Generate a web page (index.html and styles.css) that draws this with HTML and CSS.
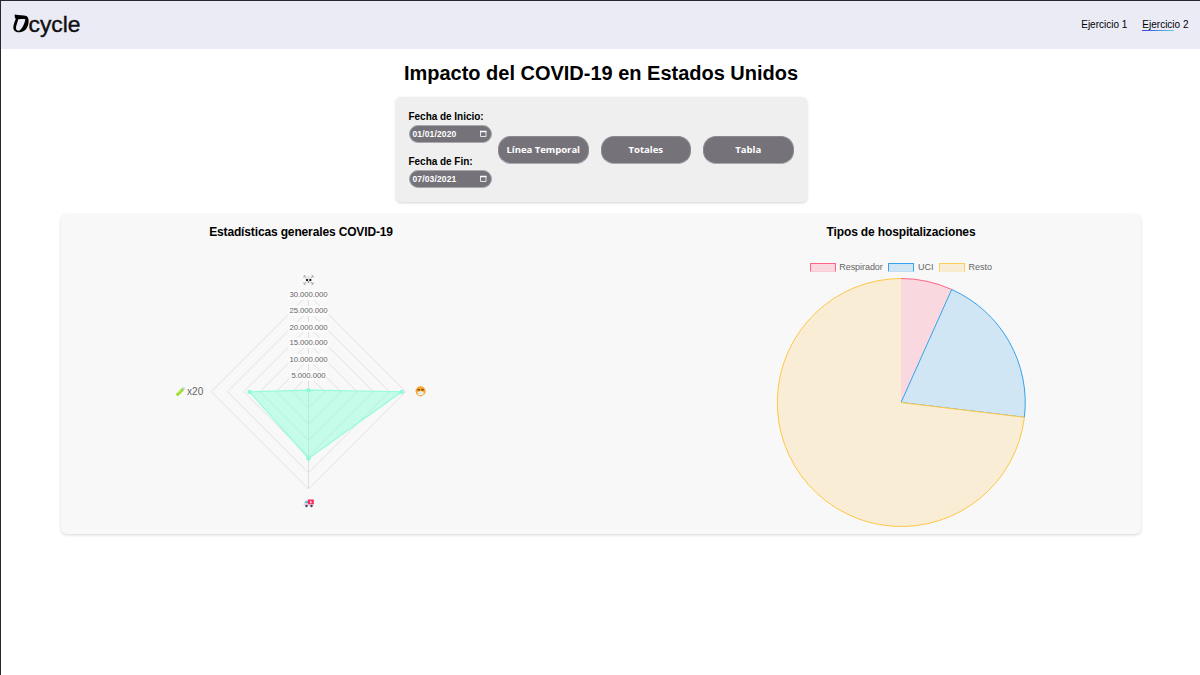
FILE: index.html
```html
<!DOCTYPE html>
<html lang="es">
<head>
<meta charset="utf-8">
<title>Dcycle</title>
<link rel="stylesheet" href="styles.css">
</head>
<body class="page">
<header class="header">
  <svg class="logo" width="70" height="28" viewBox="12 10 70 28" role="img" aria-label="Dcycle">
    <path class="logo-mark" fill-rule="evenodd" d="M14.8 13.400C19 14.400 23.500 13.900 26.400 15C28.700 16.200 29.100 19.500 28.300 23C27.200 28 24.300 31 19.500 31.300C15.600 31.500 13.300 29.500 13.300 26.500C13.300 23.500 15.200 20 15.800 17.800C14.900 17.100 14.500 15.400 14.800 13.400ZM18.200 18.200C17.500 21.500 16 24.500 16 27C16 29.200 17.500 30 19.600 29.500C22.600 27 24.800 22 25.300 18.200C23 17.800 20.500 18.300 18.200 18.200Z"/>
    <text class="logo-text" x="28.500" y="30.500" textLength="52" lengthAdjust="spacingAndGlyphs">cycle</text>
  </svg>
  <nav class="nav">
    <a class="nav-link">Ejercicio 1</a>
    <a class="nav-link nav-link-active">Ejercicio 2</a>
  </nav>
</header>
<main class="main">
  <h1 class="title">Impacto del COVID-19 en Estados Unidos</h1>
  <section class="filters">
    <div class="dates">
      <label class="date-label">Fecha de Inicio:</label>
      <div class="date"><span>01/01/2020</span><svg width="8" height="8" viewBox="0 0 8 8"><path class="calendar" d="M1.500 1.500h5.500v5h-5.500z"/><path class="calendar calendar-top" d="M1 1.500h6.500"/></svg></div>
      <label class="date-label date-label-end">Fecha de Fin:</label>
      <div class="date"><span>07/03/2021</span><svg width="8" height="8" viewBox="0 0 8 8"><path class="calendar" d="M1.500 1.500h5.500v5h-5.500z"/><path class="calendar calendar-top" d="M1 1.500h6.500"/></svg></div>
    </div>
    <div class="buttons">
      <button class="button">Línea Temporal</button>
      <button class="button">Totales</button>
      <button class="button">Tabla</button>
    </div>
  </section>
  <section class="charts">
    <article class="chart">
      <h2 class="chart-title">Estadísticas generales COVID-19</h2>
      <svg class="plot" width="480" height="290" viewBox="61 244 480 290">
        <g class="grid">
          <path d="M308.500 375.500l16.200 16.200l-16.200 16.200l-16.200-16.200z"/>
          <path d="M308.500 359.300l32.400 32.400l-32.400 32.400l-32.400-32.400z"/>
          <path d="M308.500 343.100l48.600 48.600l-48.600 48.600l-48.600-48.600z"/>
          <path d="M308.500 326.900l64.800 64.800l-64.800 64.800l-64.800-64.800z"/>
          <path d="M308.500 310.700l81 81l-81 81l-81-81z"/>
          <path d="M308.500 294.500l97.200 97.200l-97.200 97.200l-97.200-97.200z"/>
          <path class="axis" d="M308.500 294.500v194.400"/>
        </g>
        <path class="area" d="M308.500 390.200L401.700 391.700L308.500 458.500L249.500 391.700z"/>
        <g class="points"><circle cx="308.500" cy="390.200" r="2.200"/><circle cx="401.700" cy="391.900" r="2.200"/><circle cx="308.500" cy="458.500" r="2.200"/><circle cx="249.500" cy="391.900" r="2.200"/></g>
        <g class="tick-bg">
          <rect x="288.500" y="290" width="40" height="10"/><rect x="288.500" y="306" width="40" height="10"/><rect x="288.500" y="322" width="40" height="10"/><rect x="288.500" y="338" width="40" height="10"/><rect x="288.500" y="354" width="40" height="10"/><rect x="290.500" y="371" width="36" height="10"/>
        </g>
        <g class="ticks">
          <text x="289.500" y="297" textLength="38">30.000.000</text>
          <text x="289.500" y="313.200" textLength="38">25.000.000</text>
          <text x="289.500" y="329.500" textLength="38">20.000.000</text>
          <text x="289.500" y="345.400" textLength="38">15.000.000</text>
          <text x="289.500" y="361.700" textLength="38">10.000.000</text>
          <text x="291.500" y="378" textLength="34">5.000.000</text>
        </g>
        <g class="skull">
          <path class="bones" d="M304.500 276.500l8 7M312.500 276.500l-8 7"/>
          <path class="bone-ends" d="M304 277.500v-1.700h1.500M311.500 275.800h1.500v1.700M304 282.500v1.700h1.500M311.500 284.200h1.500v-1.700"/>
          <path class="skull-head" d="M305.300 279.500q0-3.500 3.200-3.500t3.200 3.500q0 2-1.200 2.500v1.500h-4v-1.500q-1.200-.5-1.200-2.500z"/>
          <path class="dark" d="M306 279h2v2h-2zM309.300 279h2v2h-2zM308.200 281.500h.8v1h-.8z"/>
        </g>
        <g class="mask">
          <circle class="face" cx="420.600" cy="391.200" r="5"/>
          <path class="brow" d="M417.500 388.900h2.500v1.700h-2.500zM421.300 388.900h2.500v1.700h-2.500z"/>
          <path class="cloth" d="M417.600 391.900q3-1.200 6 0v2.300q-3 1.700-6 0z"/>
          <path class="cloth-fold" d="M418 393.200h5.200"/>
        </g>
        <g class="ambulance">
          <path class="cab" d="M303.500 506v-2.300l1.800-3.200h2.700v5.500z"/>
          <path class="window" d="M304.800 503l1-2h2v2z"/>
          <path class="van" d="M307.800 499.500h6v5h-6z"/>
          <path class="chassis" d="M307.500 504.500h6.300v1.500h-6.300z"/>
          <path class="cross" d="M310.200 500.900h1.200v2.300h-1.200z"/>
          <circle class="wheel" cx="306.500" cy="506" r="1.200"/><circle class="wheel" cx="311.500" cy="506" r="1.200"/>
        </g>
        <g class="tube">
          <path class="glass" d="M182 390l1.500-1.500"/><path class="liquid" d="M177.600 394.300l4.600-4.400"/><path class="shine" d="M178 393l3-2.800"/>
        </g>
        <text class="point-label" x="187" y="395" textLength="16.300">x20</text>
      </svg>
    </article>
    <article class="chart">
      <h2 class="chart-title">Tipos de hospitalizaciones</h2>
      <svg class="plot" width="480" height="290" viewBox="661 244 480 290">
        <rect class="red" x="810.500" y="263.500" width="25" height="8.500"/>
        <rect class="blue" x="888.500" y="263.500" width="25" height="8.500"/>
        <rect class="yellow" x="939.500" y="263.500" width="25" height="8.500"/>
        <path class="legend-trim" d="M810 271.500h26v1.500h-26zM888 271.500h26v1.500h-26zM939 271.500h26v1.500h-26z"/>
        <g class="legend">
          <text x="839.300" y="270" textLength="43.500">Respirador</text>
          <text x="918" y="270" textLength="15.500">UCI</text>
          <text x="968.500" y="270" textLength="23.500">Resto</text>
        </g>
        <path class="red-fill" d="M901 402.500V278.500A124 124 0 0 1 951.700 289.500z"/>
        <path class="red-line" d="M901 278.500A124 124 0 0 1 951.700 289.500"/>
        <path class="blue" d="M901 402.500L951.700 289.500A124 124 0 0 1 1024.400 417.300z"/>
        <path class="yellow-fill" d="M901 402.500L1024.400 417.300A124 124 0 1 1 901 278.500z"/>
        <path class="yellow-line" d="M901 402.500L1024.400 417.300A124 124 0 1 1 901 278.500"/>
      </svg>
    </article>
  </section>
</main>
</body>
</html>
```
FILE: styles.css
```css
* { box-sizing: border-box; }
.page {
  margin: 0;
  height: 675px;
  overflow: hidden;
  border-top: 1px solid #29272d;
  border-left: 1px solid #29272d;
  background: #fff;
  color: #000;
  font-family: "Liberation Sans", Arial, sans-serif;
}
.header {
  display: flex;
  justify-content: space-between;
  align-items: center;
  height: 48px;
  padding: 0 11.5px 0 11px;
  background: #ebebf6;
}
.logo { display: block; }
.logo-mark { fill: #000; }
.logo-text { font-size: 22.5px; fill: #111; stroke: #111; stroke-width: .4; }
.nav { display: flex; gap: 15px; font-size: 10px; line-height: 12px; letter-spacing: 0; }
.nav-link-active {
  background: linear-gradient(90deg, #3440e6, #5fd0e4) left bottom / 32px 1px no-repeat;
}
.main { display: flex; flex-direction: column; align-items: center; }
.title { margin: 11px 0; padding-left: 1px; font-size: 20px; line-height: 26px; font-weight: 700; letter-spacing: -.01px; white-space: nowrap; }
.filters {
  display: flex;
  align-items: center;
  gap: 6px;
  width: 411px;
  height: 105px;
  margin-left: 1px;
  padding: 0 13px 0 13px;
  border-radius: 5px;
  background: #efefef;
  box-shadow: 0 1px 3px rgba(0, 0, 0, .17);
}
.dates { display: flex; flex-direction: column; width: 84px; margin-top: -1px; }
.date-label { font-size: 10px; line-height: 13px; font-weight: 700; letter-spacing: -.03px; white-space: nowrap; margin-bottom: 2px; }
.date-label-end { margin-top: 12px; }
.date {
  display: flex;
  align-items: center;
  justify-content: space-between;
  height: 18px;
  padding: 0 4px 0 3px;
  border: 1px solid #a9a8ad;
  border-radius: 9px;
  background: #757279;
  color: #fff;
  font-size: 8.5px;
  font-weight: 700;
  letter-spacing: .14px;
}
.calendar { fill: none; stroke: #fff; stroke-width: .8; }
.calendar-top { stroke-width: 1.500; }
.buttons { display: flex; gap: 12px; }
.button {
  width: 90.500px;
  height: 28px;
  padding: 0;
  border: 1px solid #8c8990;
  border-bottom-color: #aaa8ae;
  border-radius: 13px;
  background: #757279;
  color: #fff;
  font: 700 9.600px "Open Sans", sans-serif;
  letter-spacing: -.06px;
  white-space: nowrap;
}
.charts {
  display: grid;
  grid-template-columns: 480px 480px;
  gap: 120px;
  width: 1080px;
  height: 320px;
  margin-top: 12px;
  border-radius: 6px;
  background: #f8f8f8;
  box-shadow: 0 1px 3px rgba(0, 0, 0, .17);
}
.chart-title { margin: 10px 0 4px; padding-left: 1px; font-size: 12px; line-height: 16px; text-align: center; font-weight: 700; letter-spacing: -.14px; }
.plot { display: block; }
.grid { fill: none; stroke: #e2e2e2; stroke-width: 1; }
.axis { stroke: #dedede; }
.area { fill: rgba(127, 255, 212, .42); stroke: #96fbdc; stroke-width: 1.200; }
.points { fill: #8dfad7; }
.tick-bg { fill: #fbfbfb; }
.ticks { fill: #666; font-size: 7.800px; }
.point-label { fill: #666; font-size: 10px; }
.legend { fill: #666; font-size: 9px; }
.red { fill: #f9d9df; stroke: #ff6384; }
.blue { fill: #d0e6f5; stroke: #36a2eb; }
.yellow { fill: #f9edd6; stroke: #ffce56; }
.red-fill { fill: #f9d9df; }
.red-line { fill: none; stroke: #ff6384; }
.yellow-fill { fill: #f9edd6; }
.yellow-line { fill: none; stroke: #ffc844; }
.legend-trim { fill: #f8f8f8; }
.bones { stroke: #aaa; stroke-width: 1; }
.bone-ends { fill: none; stroke: #999; stroke-width: 1; }
.skull-head { fill: #e4e4e4; }
.dark { fill: #222; }
.face { fill: #f9a72b; }
.brow { fill: #714b2b; }
.cloth { fill: #f1f4fa; }
.cloth-fold { stroke: #c4d4ea; stroke-width: .6; }
.cab { fill: #e9d8d8; }
.window { fill: #35bdf4; }
.van { fill: #f52f60; }
.chassis { fill: #ddd4dc; }
.cross { fill: #fff; }
.wheel { fill: #403e68; }
.tube { fill: none; stroke-linecap: round; }
.glass { stroke: #b5def8; stroke-width: 3; }
.liquid { stroke: #9edb2b; stroke-width: 3; }
.shine { stroke: #d1f277; stroke-width: .8; }
```
